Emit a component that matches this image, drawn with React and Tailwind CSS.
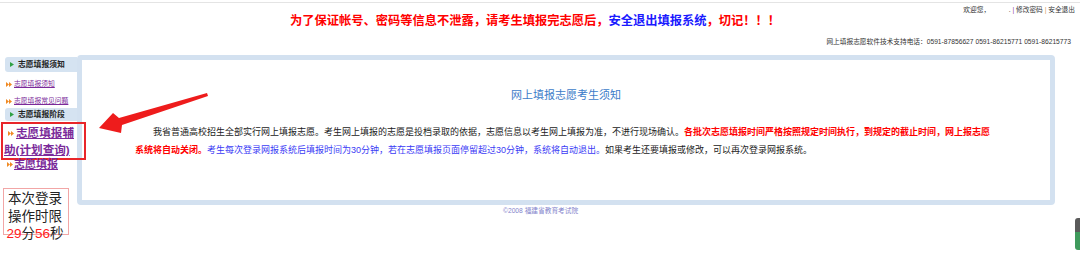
import React from 'react';

const FONT = "font-['Liberation_Sans','Noto_Sans_CJK_SC',sans-serif]";

const Bullet = ({ className = '' }) => (
  <svg className={`inline-block w-[6px] h-[5px] shrink-0 ${className}`} viewBox="0 0 6 5">
    <polygon points="0,0 3,2.5 0,5" fill="#f08a24" />
    <polygon points="3,0 6,2.5 3,5" fill="#f08a24" />
  </svg>
);

const Tab = ({ label, className = '' }) => (
  <div className={`ml-[5px] w-[72px] flex items-center gap-[4px] pl-[5px] bg-[#d5e3f1] rounded-l-[3px] ${className}`}>
    <svg className="w-[4px] h-[5px]" viewBox="0 0 4 5">
      <polygon points="0,0 4,2.5 0,5" fill="#2ea043" />
    </svg>
    <span className="text-[7.8px] font-bold text-[#222]">{label}</span>
  </div>
);

const SubLink = ({ label, className = '' }) => (
  <div className={`flex items-center pl-[6px] h-[12px] ${className}`}>
    <Bullet />
    <a className="ml-[2px] text-[6.8px] text-[#7b2a9a] underline">{label}</a>
  </div>
);

export default function App() {
  return (
    <div className={`relative w-[1080px] h-[259px] overflow-hidden bg-white ${FONT}`}>
      {/* Header */}
      <div className="pt-[2px]">
        <div className="border-t border-[#e4e4e4]" />
        <div className="h-[9px] flex justify-end pr-[5px]">
          <div className="text-[6.7px] leading-[14px] text-[#333] whitespace-pre">
            欢迎您，          .<span className="text-[#8a3aa8]"> | </span>修改密码<span className="text-[#d9a050]"> | </span>安全退出
          </div>
        </div>
        <div className="flex justify-center pr-[10px]">
          <div className="text-[12.25px] leading-[18px] font-bold text-[#ff0000]">
            为了保证帐号、密码等信息不泄露，请考生填报完志愿后，<span className="text-[#1a1aff]">安全退出填报系统</span>，切记！！！
          </div>
        </div>
        <div className="mt-[6px] flex justify-end pr-[9px]">
          <div className="text-[6.7px] leading-[12px] text-[#333]">
            网上填报志愿软件技术支持电话：0591-87856627 0591-86215771 0591-86215773
          </div>
        </div>
      </div>

      {/* Body */}
      <div className="mt-[7px] flex">
        {/* Sidebar */}
        <div className="w-[77px] shrink-0 flex flex-col relative z-10">
          <Tab label="志愿填报须知" className="mt-[2px] h-[15px]" />
          <SubLink label="志愿填报须知" className="mt-[6px]" />
          <SubLink label="志愿填报常见问题" className="mt-[5px]" />
          <Tab label="志愿填报阶段" className="mt-[1px] h-[13px]" />
          <div className="mt-[1px] ml-[1px] w-[85px] border-2 border-[#e8252a] pl-[1px]">
            <div className="text-[11.6px] leading-[17px] font-bold">
              <Bullet className="ml-[4px] mr-[2px] align-middle" />
              <a className="text-[#7b2a9a] underline">志愿填报辅助(计划查询)</a>
            </div>
          </div>
          <div className="-mt-[2px] flex items-center pl-[7px] h-[12px]">
            <Bullet />
            <a className="ml-[1px] text-[11px] leading-[12px] font-bold text-[#7b2a9a] underline">志愿填报</a>
          </div>
          <div className="mt-[18px] ml-[3px] w-[66px] h-[47px] border border-[#f2a6a6] text-center">
            <div className="text-[13.5px] leading-[17.5px] text-[#222] pt-[1px] -ml-[2px]">
              <div>本次登录</div>
              <div>操作时限</div>
              <div>
                <span className="text-[#ff2020]">29</span>分<span className="text-[#ff2020]">56</span>秒
              </div>
            </div>
          </div>
        </div>

        {/* Main */}
        <div className="flex-1 flex flex-col">
          <div className="w-[978px] h-[150px] border-[5px] border-[#d3e1f0] rounded-[4px] bg-white">
            <div className="pt-[28px] text-center text-[11px] leading-[14px] text-[#3d7cc9]">
              网上填报志愿考生须知
            </div>
            <div className="mt-[21px] pl-[53px] text-[9px] leading-[18px] text-[#222]">
              <div className="pl-[18px] whitespace-nowrap">
                我省普通高校招生全部实行网上填报志愿。考生网上填报的志愿是投档录取的依据，志愿信息以考生网上填报为准，不进行现场确认。
                <span className="text-[#ff0000] font-bold">各批次志愿填报时间严格按照规定时间执行，到规定的截止时间，网上报志愿</span>
              </div>
              <div className="whitespace-nowrap">
                <span className="text-[#ff0000] font-bold">系统将自动关闭。</span>
                <span className="text-[#3b3bf5]">考生每次登录网报系统后填报时间为30分钟，若在志愿填报页面停留超过30分钟，系统将自动退出。</span>
                如果考生还要填报或修改，可以再次登录网报系统。
              </div>
            </div>
          </div>
          <div className="mt-[2px] pl-[426px] text-[6.7px] leading-[8px] text-[#8484cc]">
            ©2008 福建省教育考试院
          </div>
        </div>
      </div>

      {/* Annotation arrow */}
      <svg className="absolute left-0 top-0 w-[1080px] h-[259px] pointer-events-none" viewBox="0 0 1080 259">
        <polygon points="99,128 113,113 119,118 207,93 208,96 122,125 121,133" fill="#ee1c1c" />
      </svg>

      {/* Floating widget at right edge */}
      <div className="absolute right-0 top-[218px] w-[5px] h-[32px] rounded-l-[3px] overflow-hidden flex flex-col">
        <div className="h-[14px] bg-[#5a5a5a]" />
        <div className="flex-1 bg-[#3f9a5c]" />
      </div>
    </div>
  );
}
